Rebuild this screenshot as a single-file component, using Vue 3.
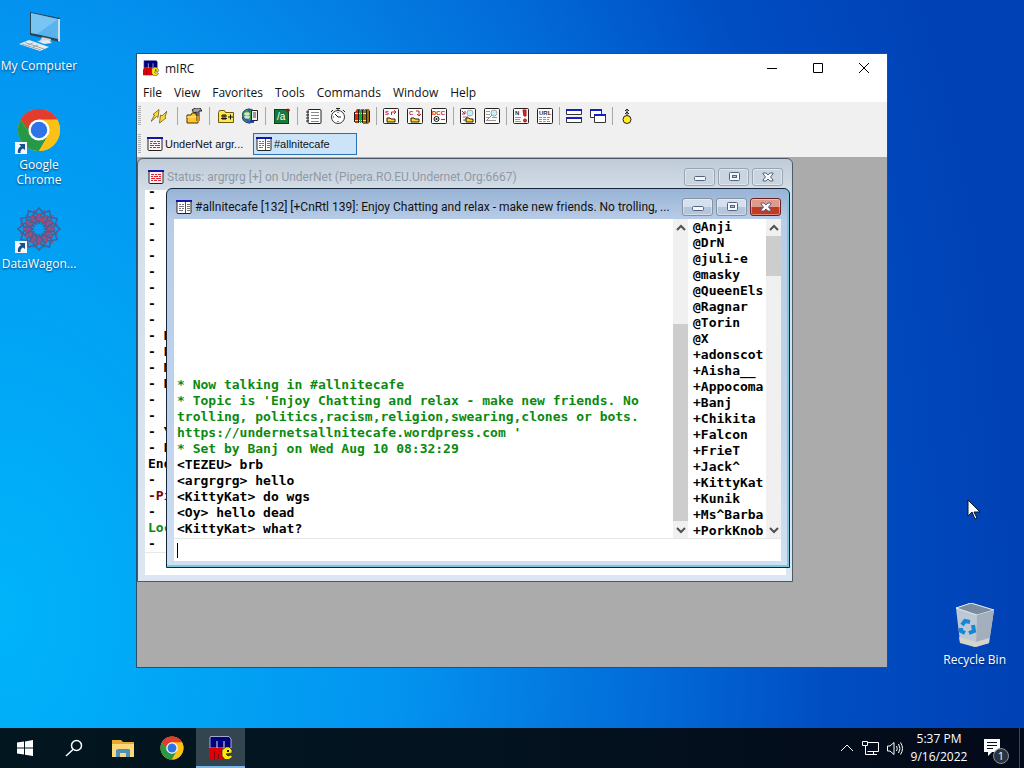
<script setup>
import { ref } from 'vue'

const menu = ['File', 'View', 'Favorites', 'Tools', 'Commands', 'Window', 'Help']

const tools = [
  ['connect'],
  ['options'],
  ['channels', 'list'],
  ['scripts'],
  ['address', 'timer', 'colors'],
  ['send', 'chat', 'dcc'],
  ['received', 'logs'],
  ['notify', 'url'],
  ['tile', 'cascade'],
  ['about'],
]

const statusLines = [
  { text: '-' }, { text: '- :' }, { text: '- :' }, { text: '- :' }, { text: '- :' },
  { text: '- :' }, { text: '- :' }, { text: '-' }, { text: '-' }, { text: '- N' },
  { text: '- H' }, { text: '- M' }, { text: '- N' }, { text: '- :' }, { text: '-' },
  { text: '- Y' }, { text: '- H' }, { text: 'End' }, { text: '-' },
  { text: '-Pi', type: 'notice' }, { text: '-' }, { text: 'Loc', type: 'info' }, { text: '-' },
]

const messages = [
  { text: '* Now talking in #allnitecafe', type: 'info' },
  { text: "* Topic is 'Enjoy Chatting and relax - make new friends. No trolling, politics,racism,religion,swearing,clones or bots. https://undernetsallnitecafe.wordpress.com '", type: 'info' },
  { text: '* Set by Banj on Wed Aug 10 08:32:29', type: 'info' },
  { text: '<TEZEU> brb' },
  { text: '<argrgrg> hello' },
  { text: '<KittyKat> do wgs' },
  { text: '<Oy> hello dead' },
  { text: '<KittyKat> what?' },
]

const nicks = [
  '@Anji', '@DrN', '@juli-e', '@masky', '@QueenEls', '@Ragnar', '@Torin', '@X',
  '+adonscot', '+Aisha__', '+Appocoma', '+Banj', '+Chikita', '+Falcon', '+FrieT',
  '+Jack^', '+KittyKat', '+Kunik', '+Ms^Barba', '+PorkKnob',
]

const draft = ref('')
const statusDraft = ref('')
</script>

<template>
  <div class="screen">
    <svg class="defs" aria-hidden="true">
      <symbol id="i-chrome" viewBox="0 0 48 48">
        <circle cx="24" cy="24" r="23" fill="#fbc116" />
        <path d="M24 24 L4.100 12.500 A23 23 0 0 1 43.900 12.500 Z" fill="#e33b2e" />
        <path d="M4.100 12.500 A23 23 0 0 0 24 47 L34 29.700 L24 24 L14 29.700 Z" fill="#279847" />
        <path d="M4.100 12.500 L14 29.700 L24 24 L24 13 Z" fill="#279847" />
        <path d="M4.100 12.500 A23 23 0 0 1 43.900 12.500 L24 12.500 A11.500 11.500 0 0 0 12.500 23 Z" fill="#e33b2e" />
        <path d="M24 12.500 H43.900 A23 23 0 0 1 24 47 L34 29.700 Z" fill="#fbc116" />
        <circle cx="24" cy="24" r="11.500" fill="#fff" />
        <circle cx="24" cy="24" r="9" fill="#2f73e8" />
      </symbol>
      <symbol id="i-mirc" viewBox="0 0 24 24">
        <path d="M2 .500 H20 L22 3 V12 H1 V1 Z" fill="#00007c" stroke="#dfe6f4" stroke-width=".7" />
        <path d="M8 5 V12 M15 5 V12" stroke="#dfe6f4" />
        <path d="M1 12 H13 L15 14 V23 H0 V14 H1 Z" fill="#e00008" />
        <path d="M5.500 15 V23 M9.500 18 V23 M10 15.500 H13" stroke="#8a0008" />
        <path d="M23 14 L20 11 H17 L13 14 V20 L16 23.500 H20 L23.500 21 L22 19 L19 20 L17 18 L23 17 Z" fill="#ffe800" stroke="#222" stroke-width=".7" />
        <rect x="18" y="14" width="2" height="2" fill="#111" />
      </symbol>
      <symbol id="i-status" viewBox="0 0 16 16">
        <rect x="1" y="1.500" width="14" height="13" rx="1" fill="#fff4f4" stroke="#222" />
        <rect x="0" y="1" width="16" height="2" fill="#1414a8" />
        <path d="M3 5.500h3M7 5.500h2M10 5.500h3M3 7.500h2M6 7.500h4M11 7.500h2M3 9.500h4M8 9.500h5M3 11.500h2M6 11.500h3M10 11.500h3" stroke="#e02030" />
      </symbol>
      <symbol id="i-channel" viewBox="0 0 16 16">
        <rect x="1" y="1.500" width="14" height="13" rx="1" fill="#fff" stroke="#222" />
        <rect x="0" y="1" width="16" height="2" fill="#1414a8" />
        <path d="M3 5.500h2M6 5.500h2M3 7.500h5M3 9.500h2M6 9.500h2M3 11.500h4M11 5.500h3M11 7.500h3M11 9.500h3M11 11.500h3" stroke="#777" />
        <path d="M9.500 3v11" stroke="#555" />
      </symbol>
      <symbol id="i-min" viewBox="0 0 14 12">
        <rect x="1.500" y="5.500" width="11" height="4" rx="1" fill="#f4f8fc" stroke="#54627c" />
      </symbol>
      <symbol id="i-max" viewBox="0 0 14 12">
        <rect x="2.500" y="1.500" width="10" height="8" rx="1" fill="#f4f8fc" stroke="#54627c" />
        <rect x="5.500" y="4.500" width="4" height="2" fill="#b4c4dc" stroke="#54627c" />
      </symbol>
      <symbol id="i-close" viewBox="0 0 14 12">
        <path d="M2 2h3l2 2 2-2h3v1L9.500 6 12 9v1H9L7 8l-2 2H2V9l2.500-3L2 3z" fill="#f8fafc" stroke="#54627c" />
      </symbol>
      <symbol id="i-shortcut" viewBox="0 0 12 12">
        <rect width="12" height="12" fill="#f2f6fa" />
        <path d="M4 2h6v6L8 6.500Q5 8 5.500 11H3Q2 6.500 6 4z" fill="#17528f" />
      </symbol>
    </svg>

    <main class="desktop">
      <nav class="shortcuts" aria-label="Desktop">
        <button class="shortcut">
          <svg class="shortcut-icon" viewBox="0 0 44 44">
            <path d="M13 3 L43 9 V33 L13 26 Z" fill="#2b4253" />
            <path d="M14 4 L41 10 V30 L14 24 Z" fill="#59b4ee" />
            <path d="M14 4 L41 10 L20 25 L14 24 Z" fill="#8ed0f8" opacity=".6" />
            <path d="M41 10 l2 0v23l-2-1z" fill="#d6dde2" />
            <path d="M25 28 L34 30 L33 34 L23 32 Z" fill="#cbd5dc" />
            <path d="M20 32 L31 31 L35 34 L27 35 Z" fill="#e6e9eb" />
            <path d="M2 35 L12 31 L32 38 L23 42 Z" fill="#e9ecee" />
            <path d="M5 35 L24 41 M8 33.500 L27 40 M11 36 l5 -2 M16 38 l5 -2" stroke="#9aa7b0" fill="none" />
          </svg>
          <span>My Computer</span>
        </button>
        <button class="shortcut">
          <span class="badged">
            <svg class="shortcut-icon"><use href="#i-chrome" /></svg>
            <svg class="arrow"><use href="#i-shortcut" /></svg>
          </span>
          <span>Google Chrome</span>
        </button>
        <button class="shortcut">
          <span class="badged">
            <svg class="shortcut-icon" viewBox="-22 -22 44 44" fill="none">
              <g v-for="n in 12" :key="n" :transform="`rotate(${n * 30})`">
                <path d="M0 -21 L6 -14 L0 -6 L-6 -14 Z" stroke="#41609a" stroke-width="1.500" />
                <path d="M0 -16 L7 -9 L2 -5" stroke="#8c4f7c" stroke-width="1.500" />
                <circle cx="0" cy="-14" r="1.500" fill="#b6446a" />
                <circle cx="3" cy="-9" r="2" fill="#b6446a" />
                <circle cx="5" cy="-18" r="1" fill="#8c4f7c" />
              </g>
            </svg>
            <svg class="arrow"><use href="#i-shortcut" /></svg>
          </span>
          <span>DataWagon...</span>
        </button>
      </nav>

      <button class="shortcut recycle">
        <svg class="shortcut-icon" viewBox="0 0 44 44">
          <path d="M3 5 L18 0 L41 7 L36 40 L22 44 L7 39 Z" fill="#bcc8d4" />
          <path d="M3 5 L18 0 L41 7 L24 12 Z" fill="#7b8c9e" stroke="#e4ecf2" />
          <path d="M24 12 L41 7 L36 40 L23 44 Z" fill="#a4afbe" />
          <path d="M6 34 L23 39 L36 35 L36 40 L22 44 L7 40 Z" fill="#d5d3cc" />
          <g fill="none" stroke="#1787d2" stroke-width="4">
            <path d="M9 22 L12 18 L17 19" />
            <path d="M20 22 L21 28 L16 30" />
            <path d="M12 30 L8 28 L8 25" />
          </g>
        </svg>
        <span>Recycle Bin</span>
      </button>

      <section class="window" aria-label="mIRC">
        <header class="titlebar">
          <svg class="icon"><use href="#i-mirc" /></svg>
          <h1>mIRC</h1>
          <button aria-label="Minimize"><svg viewBox="0 0 12 12"><path d="M1 6.500h10" /></svg></button>
          <button aria-label="Maximize"><svg viewBox="0 0 12 12"><path d="M1.500 1.500h9v9h-9z" /></svg></button>
          <button aria-label="Close"><svg viewBox="0 0 12 12"><path d="M1 1l10 10M11 1L1 11" /></svg></button>
        </header>

        <nav class="menubar">
          <button v-for="item in menu" :key="item">{{ item }}</button>
        </nav>

        <div class="toolbar">
          <span class="grip"></span>
          <div v-for="(group, i) in tools" :key="i" class="group">
            <button v-for="tool in group" :key="tool" :class="tool" :aria-label="tool">
              <svg class="icon" viewBox="0 0 16 16" fill="none">
                <g v-if="tool === 'connect'" fill="#ffd93a" stroke="#6b5a10" stroke-width=".8">
                  <path d="M8 1.500 L7 9.500 L5.500 8.500 L0 13.500 L3.500 7 L2 6.500 Z" />
                  <path d="M16 3 L14 9 L15 10 L8.500 15 L9.500 7 L11 8 Z" />
                </g>
                <g v-else-if="tool === 'options'">
                  <path d="M1 7h4l1-2h4v2h2v8H1z" fill="#ffc52e" stroke="#4a3500" />
                  <path d="M1 9h11" stroke="#fff08a" />
                  <path d="M6 2l3-2h5l2 3h-3v10h-2V4L8 5z" fill="#a0a4a8" stroke="#222" />
                  <path d="M12 8v6" stroke="#e08a20" stroke-width="2" />
                </g>
                <g v-else-if="tool === 'channels'">
                  <path d="M.500 4.500l1-2h5l1 2h8v10H.500z" fill="#ffe94a" stroke="#6b5a10" />
                  <path d="M5 6v6M7 6v6M3 8h6M3 10.500h6M10 9h5M12.500 6.500v5" stroke="#111" />
                </g>
                <g v-else-if="tool === 'list'">
                  <circle cx="7" cy="8" r="7" fill="#3e9a45" stroke="#183a60" />
                  <path d="M1 9l4 3 3 3M6 1l2 3" stroke="#3454bb" stroke-width="2" />
                  <path d="M4 4v7M6 4v7M2 6h6M2 9h6" stroke="#fff" />
                  <path d="M9.500 2.500h6v10h-6z" fill="#f2f2f2" stroke="#222" />
                  <path d="M11 5h3M11 7h3M11 9h3" stroke="#444" />
                  <path d="M8 13l4 1" stroke="#1634c0" stroke-width="2" />
                </g>
                <g v-else-if="tool === 'scripts'">
                  <rect x=".500" y="1.500" width="14" height="14" fill="#167a37" stroke="#0a3f1c" />
                  <text x="3" y="12" class="t-script">/a</text>
                  <path d="M13 4l2-3" stroke="#8c2020" stroke-width="3" />
                </g>
                <g v-else-if="tool === 'address'">
                  <rect x="2" y="1.500" width="13" height="14" rx="1" fill="#fff" stroke="#222" />
                  <path d="M0 4h3M0 7h3M0 10h3M0 13h3" stroke="#222" />
                  <path d="M5 4.500h8M5 7.500h8M5 10.500h8M5 13.500h8" stroke="#888" />
                </g>
                <g v-else-if="tool === 'timer'">
                  <circle cx="8" cy="9" r="6.500" fill="#fff" stroke="#333" />
                  <path d="M6 .500h4M8 1v2M13 2l2 2M3 2L1 4M8 9h3M8 4v1M8 13v1M3 9h1M5 6l3 3" stroke="#222" />
                </g>
                <g v-else-if="tool === 'colors'">
                  <path d="M1 4l2-3h3v12l-2 2H1z" fill="#d82818" />
                  <path d="M5 4l2-3h3v13H5z" fill="#1f8fa0" />
                  <path d="M9 4l2-3h4l1 2v11l-2 2H9z" fill="#9a6a18" />
                  <path d="M4.500 2v13M8.500 2v13M12.500 2v13M.500 4v10M15.500 3v11" stroke="#221a10" />
                  <path d="M1 5.500h3M5 5.500h3M9 5.500h3M1 12.500h3M5 12.500h3M9 12.500h3" stroke="#ffe44a" />
                  <path d="M6.500 3v12" stroke="#1fa83c" />
                </g>
                <g v-else-if="['send', 'chat', 'dcc', 'received', 'logs', 'notify', 'url'].includes(tool)">
                  <rect x=".500" y=".500" width="15" height="15" rx="1" fill="#fdfafa" stroke="#222" />
                  <template v-if="tool === 'send'">
                    <text x="2" y="7" class="t-red">S</text>
                    <path d="M8.500 7V4h4M11 2l2 2-2 2" stroke="#d02020" />
                    <path d="M4 10h3l1 1h4v3H4z" fill="#ffd530" stroke="#332200" />
                  </template>
                  <template v-else-if="tool === 'chat'">
                    <text x="2" y="7" class="t-red">C</text>
                    <path d="M9 3h3v4M10 6l2 2 2-2" stroke="#d02020" />
                    <path d="M4 10h3l1 1h4v3H4z" fill="#ffd530" stroke="#332200" />
                  </template>
                  <template v-else-if="tool === 'dcc'">
                    <text x="1" y="7" class="t-red">DCC</text>
                    <circle cx="5.500" cy="11" r="2.500" stroke="#111" />
                    <circle cx="5.500" cy="11" r="1" fill="#111" />
                    <path d="M10 11.500h4" stroke="#d02020" />
                  </template>
                  <template v-else-if="tool === 'received'">
                    <path d="M2 3l3 3M5 3v3H2" stroke="#c02040" />
                    <path d="M3 9h4M3 12h3M9 7l-5 6" stroke="#888" />
                    <circle cx="10" cy="5" r="3" fill="#c4f0f8" stroke="#aaa" />
                    <path d="M6 10h3l1 1h3v3H6z" fill="#ffd530" stroke="#332200" />
                  </template>
                  <template v-else-if="tool === 'logs'">
                    <path d="M2 3.500h4M2 6.500h4M2 9.500h3M2 12.500h10M8 9.500h5" stroke="#999" />
                    <circle cx="10" cy="5" r="3" fill="#c4f0f8" stroke="#aaa" />
                    <path d="M8 7l-5 5" stroke="#888" />
                  </template>
                  <template v-else-if="tool === 'notify'">
                    <text x="2" y="7" class="t-dark">N</text>
                    <path d="M2 9.500h6M2 11.500h5M2 13.500h6" stroke="#999" />
                    <path d="M10 2h3v6h-2z" fill="#e03020" stroke="#b01010" />
                    <circle cx="12" cy="12.500" r="1.500" fill="#e03020" stroke="#b01010" />
                  </template>
                  <template v-else>
                    <text x="2" y="7" class="t-dark">URL</text>
                    <path d="M2 9.500h12M2 11.500h10M2 13.500h12" stroke="#999" stroke-dasharray="3 1" />
                  </template>
                </g>
                <g v-else-if="tool === 'tile'">
                  <path d="M.500 1.500h15v5H.500zM.500 9.500h15v5H.500z" fill="#fff" stroke="#333" />
                  <path d="M0 2h16M0 10h16" stroke="#1520c0" stroke-width="2" />
                </g>
                <g v-else-if="tool === 'cascade'">
                  <path d="M.500 1.500h11v8H.500z" fill="#fff" stroke="#333" />
                  <path d="M0 2h12" stroke="#1520c0" stroke-width="2" />
                  <path d="M4.500 6.500h11v8h-11z" fill="#fff" stroke="#333" />
                  <path d="M4 7h12" stroke="#1520c0" stroke-width="2" />
                </g>
                <g v-else>
                  <path d="M6 3l2-2 2 2M8 2v5M6 6l2-2 2 2" stroke="#222" />
                  <circle cx="8" cy="11.500" r="4" fill="#ffed20" stroke="#222" />
                </g>
              </svg>
            </button>
          </div>
        </div>

        <div class="switchbar">
          <span class="grip"></span>
          <button>
            <svg class="icon"><use href="#i-status" /></svg>
            UnderNet argr...
          </button>
          <button class="active">
            <svg class="icon"><use href="#i-channel" /></svg>
            #allnitecafe
          </button>
        </div>

        <div class="mdi">
          <section class="child status" aria-label="Status">
            <header>
              <svg class="icon"><use href="#i-status" /></svg>
              <h2>Status: argrgrg [+] on UnderNet (Pipera.RO.EU.Undernet.Org:6667)</h2>
              <button aria-label="Minimize"><svg><use href="#i-min" /></svg></button>
              <button aria-label="Maximize"><svg><use href="#i-max" /></svg></button>
              <button aria-label="Close"><svg><use href="#i-close" /></svg></button>
            </header>
            <div class="body">
              <div class="log">
                <p v-for="(line, i) in statusLines" :key="i" :class="line.type">{{ line.text }}</p>
              </div>
              <div class="entry">
                <input v-model="statusDraft" type="text" aria-label="Status command">
              </div>
            </div>
          </section>

          <section class="child channel" aria-label="#allnitecafe">
            <header>
              <svg class="icon"><use href="#i-channel" /></svg>
              <h2>#allnitecafe [132] [+CnRtl 139]: Enjoy Chatting and relax - make new friends. No trolling, ...</h2>
              <button aria-label="Minimize"><svg><use href="#i-min" /></svg></button>
              <button aria-label="Maximize"><svg><use href="#i-max" /></svg></button>
              <button class="close" aria-label="Close"><svg><use href="#i-close" /></svg></button>
            </header>
            <div class="body">
              <div class="panes">
                <div class="log">
                  <p v-for="(line, i) in messages" :key="i" :class="line.type">{{ line.text }}</p>
                </div>
                <div class="scrollbar bottom">
                  <button aria-label="Scroll up"><svg viewBox="0 0 10 10"><path d="M1 7l4-4 4 4" /></svg></button>
                  <span class="track"><span class="thumb"></span></span>
                  <button aria-label="Scroll down"><svg viewBox="0 0 10 10"><path d="M1 3l4 4 4-4" /></svg></button>
                </div>
                <ul class="nicks">
                  <li v-for="nick in nicks" :key="nick">{{ nick }}</li>
                </ul>
                <div class="scrollbar top">
                  <button aria-label="Scroll nicks up"><svg viewBox="0 0 10 10"><path d="M1 7l4-4 4 4" /></svg></button>
                  <span class="track"><span class="thumb"></span></span>
                  <button aria-label="Scroll nicks down"><svg viewBox="0 0 10 10"><path d="M1 3l4 4 4-4" /></svg></button>
                </div>
              </div>
              <div class="entry">
                <span class="caret"></span>
                <input v-model="draft" type="text" aria-label="Message #allnitecafe">
              </div>
            </div>
          </section>
        </div>
      </section>

      <svg class="cursor" viewBox="0 0 14 21">
        <path d="M1 1v16l4-4 3 7 2-1-3-6h6z" fill="#fff" stroke="#06142e" />
      </svg>
    </main>

    <footer class="taskbar">
      <button aria-label="Start">
        <svg viewBox="0 0 24 24"><path d="M4 6.500l7-1v6H4zM12 5.400L20 4v7.500h-8zM4 12.500h7v6l-7-1zM12 12.500h8V20l-8-1.300z" fill="#fff" /></svg>
      </button>
      <button aria-label="Search">
        <svg viewBox="0 0 24 24" fill="none" stroke="#fff" stroke-width="1.500"><circle cx="14.500" cy="9.500" r="5" /><path d="M11 13.500L4 20" /></svg>
      </button>
      <button aria-label="File Explorer">
        <svg viewBox="0 0 24 24">
          <path d="M1 4h9l2 2h11v15H1z" fill="#e8a92c" />
          <path d="M1 8h22v13H1z" fill="#fbd979" />
          <path d="M5 21v-7l2-1h11l1 1v7h-4v-4H9v4z" fill="#4d8fb8" />
        </svg>
      </button>
      <button aria-label="Google Chrome"><svg><use href="#i-chrome" /></svg></button>
      <button class="running" aria-label="mIRC"><svg><use href="#i-mirc" /></svg></button>

      <div class="tray">
        <button aria-label="Show hidden icons">
          <svg viewBox="0 0 18 18"><path d="M3 12l6-6 6 6" /></svg>
        </button>
        <button aria-label="Network">
          <svg viewBox="0 0 18 18"><path d="M5.500 3.500h11v9h-11M8 15.500h7M11.500 12.500v3M.500 2.500h5v4h-5zM3.500 7v8.500H8" /></svg>
        </button>
        <button aria-label="Volume">
          <svg viewBox="0 0 18 18"><path d="M1.500 7v5h2.500l4 3.500V3.500L4 7zM10.500 7q1.500 2.500 0 5M12.500 5q3 4.500 0 9M14.500 3.500q4 6 0 12" /></svg>
        </button>
        <time>
          <span>5:37 PM</span>
          <span>9/16/2022</span>
        </time>
        <button class="notes" aria-label="Notifications">
          <svg viewBox="0 0 24 24">
            <path d="M3 3h16v13h-8l-4 4v-4H3z" fill="#fff" stroke="none" />
            <path d="M6 6.500h10M6 9.500h10M6 12.500h6" stroke="#06101c" />
          </svg>
          <span class="count">1</span>
        </button>
      </div>
    </footer>
  </div>
</template>

<style>
body {
  margin: 0;
}
</style>

<style scoped>
.screen {
  min-height: 100vh;
  display: flex;
  flex-direction: column;
  overflow: hidden;
  font-family: "Open Sans", "Noto Sans", sans-serif;
  font-size: 12px;
  color: #111;
  background: radial-gradient(ellipse 90% 180% at 0 80%, #00b4fa 0, #0394f0 43%, #0480e4 56%, #026cd8 70%, #004dc2 90%, #0042b6 110%);
}

.defs {
  position: absolute;
  width: 0;
  height: 0;
}

button {
  display: flex;
  align-items: center;
  justify-content: center;
  padding: 0;
  border: 0;
  background: none;
  font: inherit;
  color: inherit;
}

h1,
h2,
p,
ul {
  margin: 0;
  padding: 0;
  font-size: 12px;
  font-weight: 400;
  list-style: none;
}

.icon {
  width: 16px;
  height: 16px;
  flex: none;
}

/* desktop */
.desktop {
  position: relative;
  flex: 1;
}

.shortcuts {
  display: grid;
  grid-auto-rows: 99px;
  width: 78px;
  padding-top: 9px;
}

.shortcut {
  flex-direction: column;
  justify-content: flex-start;
  gap: 5px;
  color: #fff;
  line-height: 15px;
  text-shadow: 0 1px 2px rgba(0, 20, 60, 0.7);
}

.shortcut-icon {
  display: block;
  width: 44px;
  height: 44px;
}

.badged {
  position: relative;
}

.arrow {
  position: absolute;
  left: -2px;
  bottom: -2px;
  width: 12px;
  height: 12px;
}

.recycle {
  position: absolute;
  right: 18px;
  bottom: 61px;
}

.cursor {
  position: absolute;
  left: 967px;
  top: 499px;
  width: 14px;
  height: 21px;
}

/* main window */
.window {
  position: absolute;
  inset: 53px 136px 60px;
  display: flex;
  flex-direction: column;
  border: 1px solid #27506f;
  box-sizing: border-box;
  background: #fff;
}

.titlebar {
  display: flex;
  align-items: center;
  height: 28px;
  padding-left: 6px;
}

.titlebar h1 {
  flex: 1;
  margin-left: 6px;
}

.titlebar button {
  width: 46px;
  height: 28px;
}

.titlebar button svg {
  width: 12px;
  height: 12px;
  fill: none;
  stroke: #000;
}

.menubar {
  display: flex;
  height: 20px;
}

.menubar button {
  padding: 0 6px;
}

.toolbar,
.switchbar {
  display: flex;
  align-items: center;
  background: #f0f0f0;
}

.toolbar {
  height: 28px;
}

.switchbar {
  height: 27px;
  font-family: "Liberation Sans", Arial, sans-serif;
  font-size: 11px;
}

.grip {
  width: 3px;
  height: 20px;
  margin: 0 2px 0 1px;
  background: repeating-linear-gradient(#b0b0b0 0 1px, #f0f0f0 1px 2px);
}

.group {
  display: flex;
}

.group + .group::before {
  content: "";
  width: 1px;
  height: 18px;
  margin: 3px 2px;
  background: #a8a8a8;
}

.group + .group:nth-child(-n + 6)::before {
  margin: 3px 4px 3px 3px;
}

.group button {
  width: 24px;
  height: 24px;
}

.group .connect {
  width: 31px;
}

.t-script {
  font: 400 10px "Liberation Sans", sans-serif;
  fill: #fff;
}

.t-red,
.t-dark {
  font: 700 6px "Liberation Sans", sans-serif;
  fill: #c81818;
}

.t-dark {
  fill: #333;
}

.switchbar button {
  justify-content: flex-start;
  gap: 2px;
  width: 104px;
  height: 22px;
  margin-right: 6px;
  padding-left: 4px;
  box-sizing: border-box;
  white-space: nowrap;
}

.switchbar .active {
  padding-left: 2px;
  border: 1px solid #2a70b4;
  background: #cce4f8;
}

/* mdi area */
.mdi {
  position: relative;
  flex: 1;
  overflow: hidden;
  background: #ababab;
}

.child {
  position: absolute;
  display: flex;
  flex-direction: column;
  box-sizing: border-box;
  border: 1px solid #4b5a68;
  border-radius: 6px 6px 0 0;
}

.child header {
  display: flex;
  align-items: center;
  gap: 3px;
  flex: none;
}

.child h2 {
  flex: 1;
  min-width: 0;
  font-family: Roboto, sans-serif;
  white-space: nowrap;
}

.child header button {
  flex: none;
  width: 31px;
  height: 18px;
  box-sizing: border-box;
  border: 1px solid #8492a4;
  border-radius: 3px;
  background: linear-gradient(#d4e0ee 48%, #b4c6dc 52%);
  box-shadow: inset 0 0 0 1px rgba(255, 255, 255, 0.4);
}

.child header button svg {
  width: 14px;
  height: 12px;
}

.child .body {
  flex: 1;
  min-height: 0;
  display: flex;
  flex-direction: column;
  background: #fff;
}

.status {
  inset: 1px 94px 85px 0;
  padding: 0 6px 6px 7px;
  background: linear-gradient(#bfcbd7, #d5dfe9 34px, #dce6f0);
}

.status header {
  height: 31px;
  padding: 4px 3px 0;
  box-sizing: border-box;
}

.status h2 {
  color: #8f99a4;
}

.status header button {
  background: #cbd5e0;
  border-color: #98a5b4;
}

.channel {
  inset: 31px 97px 99px 29px;
  padding: 0 8px 6px 7px;
  border-color: #15263a;
  background: linear-gradient(#98b3d5, #b9cde8 32px, #bfd2ea 60%, #cfe0f2);
  box-shadow: inset -1px -1px 0 1px #7cc8da;
}

.channel header {
  height: 30px;
  padding: 5px 0 0 2px;
  box-sizing: border-box;
}

.channel header .close {
  border-color: #6c1f20;
  background: linear-gradient(#e09a8c 48%, #c03a26 52%);
}

.panes {
  flex: 1;
  min-height: 0;
  display: flex;
}

.log,
.nicks {
  font-family: "DejaVu Sans Mono", "Liberation Mono", monospace;
  font-size: 13px;
  font-weight: 700;
  line-height: 16px;
  color: #000;
}

.log {
  flex: 1;
  min-width: 0;
  min-height: 0;
  display: flex;
  flex-direction: column;
  justify-content: flex-end;
  overflow: hidden;
  padding: 0 3px;
}

.channel .log {
  padding-bottom: 1px;
}

.log p,
.nicks li {
  flex: none;
  font-size: 13px;
  font-weight: 700;
}

.log .info {
  color: #0b8a10;
}

.log .notice {
  color: #7f0000;
}

.nicks {
  width: 73px;
  padding-left: 5px;
  overflow: hidden;
}

.scrollbar {
  width: 15px;
  display: flex;
  flex-direction: column;
  background: #f0f0f0;
}

.scrollbar button {
  height: 17px;
}

.scrollbar svg {
  width: 10px;
  height: 10px;
  fill: none;
  stroke: #505050;
  stroke-width: 2;
}

.track {
  flex: 1;
  display: flex;
  flex-direction: column;
}

.thumb {
  background: #cdcdcd;
}

.bottom .track {
  justify-content: flex-end;
}

.bottom .thumb {
  height: 69%;
}

.top .thumb {
  height: 14%;
}

.entry {
  display: flex;
  align-items: center;
  flex: none;
  height: 22px;
  padding-left: 3px;
  border-top: 1px solid #e8e8e8;
}

.entry input {
  flex: 1;
  min-width: 0;
  padding: 0;
  border: 0;
  outline: 0;
  background: none;
  font: 700 13px "DejaVu Sans Mono", monospace;
}

.caret {
  width: 1px;
  height: 15px;
  background: #000;
}

/* taskbar */
.taskbar {
  display: flex;
  height: 40px;
  color: #fff;
  background: linear-gradient(90deg, #02161f, #031420 40%, #030a1a);
}

.taskbar > button {
  width: 49px;
}

.taskbar > button svg {
  width: 24px;
  height: 24px;
}

.taskbar .running {
  background: #33454f;
  box-shadow: inset 0 -2px #7ab8e8;
}

.tray {
  display: flex;
  align-items: center;
  margin-left: auto;
  margin-right: 4px;
  padding-right: 10px;
  border-right: 1px solid #3a4654;
}

.tray button {
  width: 24px;
  height: 40px;
}

.tray svg {
  width: 18px;
  height: 18px;
  fill: none;
  stroke: #fff;
}

.tray time {
  display: flex;
  flex-direction: column;
  align-items: center;
  width: 60px;
  margin: 0 8px 0 2px;
  line-height: 18px;
}

.tray .notes {
  position: relative;
  width: 32px;
}

.tray .notes svg {
  width: 24px;
  height: 24px;
}

.count {
  position: absolute;
  right: 0;
  bottom: 4px;
  width: 16px;
  height: 16px;
  border: 1px solid #8a929c;
  border-radius: 50%;
  box-sizing: border-box;
  background: #2b343e;
  font-size: 11px;
  line-height: 14px;
  text-align: center;
}
</style>
